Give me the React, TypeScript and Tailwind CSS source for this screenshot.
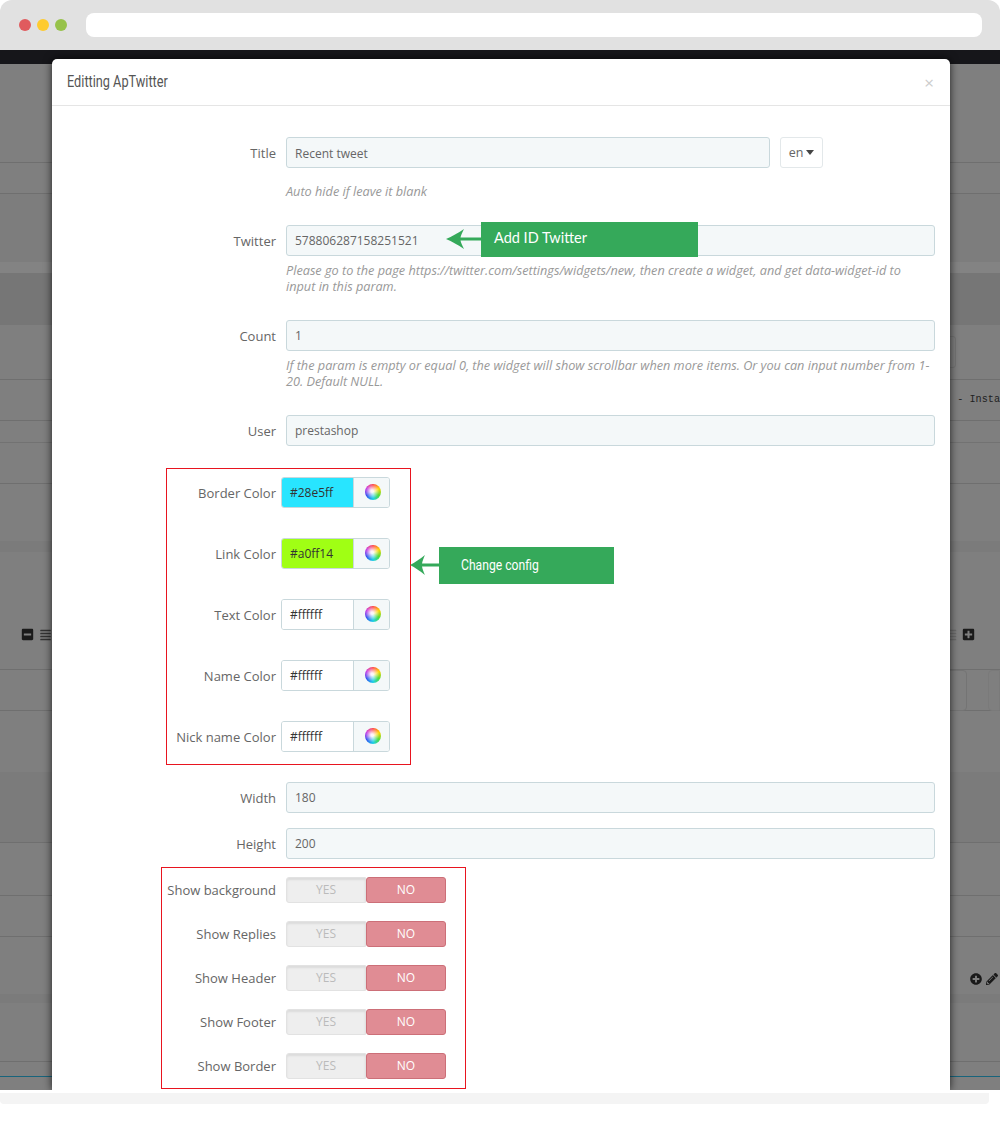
import React from 'react';
import { FaAlignJustify, FaMinusSquare, FaPencilAlt, FaPlusCircle, FaPlusSquare } from 'react-icons/fa';

const sans = "font-['Open_Sans',sans-serif]";

function Arrow({ className }: { className: string }) {
  return (
    <svg viewBox="0 0 35 22" preserveAspectRatio="none" className={`h-[22px] shrink-0 ${className}`}>
      <path d="M0 11 C6 8.5 12 5 18 1 C16.5 4 15 7 14.5 9.5 H35 V12.5 H14.5 C15 15 16.5 18 18 21 C12 17 6 13.5 0 11 Z" fill="#35a95a" />
    </svg>
  );
}

function Field({ label, value, children }: { label: string; value: string; children?: React.ReactNode }) {
  return (
    <div className="relative flex items-center">
      <div className="w-[224px] pt-[3px] text-right text-[13px] text-[#666]">{label}</div>
      <div className="ml-[10px] flex h-[31px] w-[649px] items-center rounded-[3px] border border-[#c9d8dc] bg-[#f4f8f9] px-2 pt-[2px] text-[12px] text-[#666]">
        {value}
      </div>
      {children}
    </div>
  );
}

function Hint({ children, className }: { children: React.ReactNode; className?: string }) {
  return (
    <div className={`ml-[234px] w-[646px] text-[12.7px] leading-[16.5px] text-[#999] italic ${className ?? ''}`}>{children}</div>
  );
}

function ColorRow({ label, value, bg }: { label: string; value: string; bg: string }) {
  return (
    <div className="flex items-center justify-end gap-[5px]">
      <div className="pt-[3px] text-[13px] text-[#666]">{label}</div>
      <div className="flex h-[31px] w-[109px] overflow-hidden rounded-[3px] border border-[#c9d8dc]">
        <div className={`flex w-[71px] items-center pt-[2px] pl-2 text-[12px] text-[#333] ${bg}`}>{value}</div>
        <div className="flex flex-1 items-center justify-center border-l border-[#c9d8dc] bg-[#f4f8f9] pl-[2px]">
          <div className="flex h-4 w-4 items-center justify-center rounded-full bg-[conic-gradient(#ff3b3b,#ffd500,#4fdc3c,#1fd0e8,#2f4ff0,#c01fe0,#ff3b3b)]">
            <div className="h-4 w-4 rounded-full bg-[radial-gradient(circle_at_45%_45%,rgba(255,255,255,0.95)_10%,rgba(255,255,255,0)_58%)]" />
          </div>
        </div>
      </div>
    </div>
  );
}

function SwitchRow({ label }: { label: string }) {
  return (
    <div className="flex items-center justify-end gap-[10px]">
      <div className="pt-[2px] text-[13px] text-[#666]">{label}</div>
      <div className="flex h-[26px] w-[160px] text-[12px]">
        <div className="flex w-[80px] items-center justify-center rounded-l-[3px] border border-[#e2e2e2] bg-[#eeeeee] text-[#bbb] shadow-[inset_0_2px_2px_rgba(0,0,0,0.08)]">YES</div>
        <div className="flex w-[80px] items-center justify-center rounded-[3px] border border-[#cc6f78] bg-[#e08c94] text-white">NO</div>
      </div>
    </div>
  );
}

function Modal() {
  return (
    <div className={`absolute top-[9px] left-[52px] h-[1031px] w-[898px] overflow-hidden rounded-t-[5px] bg-white shadow-[0_0_9px_rgba(0,0,0,0.75)] ${sans}`}>
      <div className="flex h-[47px] items-center justify-between border-b border-[#e5e5e5] pr-[16px] pl-[15px]">
        <div className="origin-left scale-x-[0.795] font-['Roboto',sans-serif] text-[16px] text-[#555]">Editting ApTwitter</div>
        <div className="text-[17px] leading-none text-[#ccc]">×</div>
      </div>

      <div className="mt-[31px] flex items-center">
        <div className="w-[224px] pt-[3px] text-right text-[13px] text-[#666]">Title</div>
        <div className="ml-[10px] flex h-[31px] w-[484px] items-center rounded-[3px] border border-[#c9d8dc] bg-[#f4f8f9] px-2 pt-[2px] text-[12px] text-[#666]">Recent tweet</div>
        <div className="ml-[10px] flex h-[31px] w-[43px] items-center justify-center gap-[3px] rounded-[3px] border border-[#e3e8ea] pt-[2px] text-[12.5px] text-[#666]">
          en
          <span className="mb-[2px] border-x-[4.5px] border-t-[5px] border-x-transparent border-t-[#444]" />
        </div>
      </div>
      <Hint className="mt-[15px]">Auto hide if leave it blank</Hint>

      <div className="mt-[25px]">
        <Field label="Twitter" value="578806287158251521">
          <div className="absolute top-[-3px] left-[394px] flex items-center">
            <Arrow className="w-[35px]" />
            <div className="flex h-[35px] w-[217px] items-center bg-[#35a95a] pb-[2px] pl-[13px] font-['Lato',sans-serif] text-[14.5px] text-white">Add ID Twitter</div>
          </div>
        </Field>
      </div>
      <Hint className="mt-[6px]">Please go to the page https://twitter.com/settings/widgets/new, then create a widget, and get data-widget-id to input in this param.</Hint>

      <div className="mt-[25px]">
        <Field label="Count" value="1" />
      </div>
      <Hint className="mt-[6px]">If the param is empty or equal 0, the widget will show scrollbar when more items. Or you can input number from 1-20. Default NULL.</Hint>

      <div className="mt-[25px]">
        <Field label="User" value="prestashop" />
      </div>

      <div className="mt-[22px] flex items-start">
        <div className="ml-[114px] flex h-[297px] w-[245px] flex-col gap-[30px] border border-[#e8141f] pt-[8px] pr-[20px]">
          <ColorRow label="Border Color" value="#28e5ff" bg="bg-[#28e5ff]" />
          <ColorRow label="Link Color" value="#a0ff14" bg="bg-[#a0ff14]" />
          <ColorRow label="Text Color" value="#ffffff" bg="bg-white" />
          <ColorRow label="Name Color" value="#ffffff" bg="bg-white" />
          <ColorRow label="Nick name Color" value="#ffffff" bg="bg-white" />
        </div>
        <div className="mt-[79px] -ml-[1px] flex items-center">
          <Arrow className="w-[29px]" />
          <div className="flex h-[37px] w-[175px] items-center bg-[#35a95a] pl-[22px] text-white">
            <span className="origin-left scale-x-[0.81] font-['Roboto',sans-serif] text-[15px]">Change config</span>
          </div>
        </div>
      </div>

      <div className="mt-[17px]">
        <Field label="Width" value="180" />
      </div>
      <div className="mt-[15px]">
        <Field label="Height" value="200" />
      </div>

      <div className="mt-[8px] ml-[109px] flex h-[222px] w-[305px] flex-col gap-[18px] border border-[#e8141f] pt-[9px] pr-[19px]">
        <SwitchRow label="Show background" />
        <SwitchRow label="Show Replies" />
        <SwitchRow label="Show Header" />
        <SwitchRow label="Show Footer" />
        <SwitchRow label="Show Border" />
      </div>
    </div>
  );
}

// the dimmed admin page behind the modal
function Backdrop() {
  return (
    <div className="flex flex-col bg-[#7f7f7f]">
      <div className="h-[14px] bg-[#16161a]" />
      <div className="h-[99px] border-b border-[#6f6f6f]" />
      <div className="h-[31px] border-b border-[#6f6f6f]" />
      <div className="h-[68px] bg-[#7d7d7d]" />
      <div className="h-[11px] bg-[#838383]" />
      <div className="h-[52px] bg-[#767676]" />
      <div className="flex h-[55px] items-center justify-end border-b border-[#6f6f6f] pr-[44px]">
        <div className="h-[32px] w-[8px] rounded-r-[3px] border border-[#747474]" />
      </div>
      <div className="flex h-[41px] items-center justify-end border-b border-[#6f6f6f]">
        <span className="font-['Liberation_Mono',monospace] text-[10.2px] whitespace-nowrap text-[#222]">- Insta</span>
      </div>
      <div className="h-[22px] border-b border-[#727272]" />
      <div className="h-[41px] border-b border-[#6f6f6f]" />
      <div className="h-[57px]" />
      <div className="h-[11px] bg-[#7b7b7b]" />
      <div className="h-[68px]" />
      <div className="flex h-[50px] items-start justify-between border-b border-[#6f6f6f] pt-[8px] pr-[25px] pl-[21px] text-[13px]">
        <div className="flex items-center gap-[5px] text-[#1a1a1a]">
          <FaMinusSquare className="h-[13px] w-[13px]" />
          <FaAlignJustify className="h-[12px] w-[13px] text-[#333]" />
        </div>
        <div className="flex items-center gap-[5px] text-[#1a1a1a]">
          <FaAlignJustify className="h-[12px] w-[12px] text-[#6a6a6a]" />
          <FaPlusSquare className="h-[13px] w-[13px]" />
        </div>
      </div>
      <div className="flex h-[41px] justify-end gap-[21px] border-b border-[#6f6f6f]">
        <div className="h-[41px] w-[30px] rounded-r-[4px] border border-[#747474]" />
        <div className="h-[41px] w-[12px] rounded-l-[4px] border border-[#7a7a7a]" />
      </div>
      <div className="h-[61px]" />
      <div className="h-[10px] bg-[#7b7b7b]" />
      <div className="h-[60px] bg-[#7b7b7b]" />
      <div className="h-[54px] border-t border-b border-[#6f6f6f]" />
      <div className="h-[41px] border-b border-[#6f6f6f]" />
      <div className="flex h-[57px] items-end justify-end gap-[4px] pr-[2px] pb-[9px] text-[#1a1a1a]">
        <FaPlusCircle className="h-[12px] w-[12px]" />
        <FaPencilAlt className="h-[12px] w-[12px]" />
      </div>
      <div className="h-[9px] bg-[#7b7b7b]" />
      <div className="h-[59px] border-b border-[#6f6f6f]" />
      <div className="h-[15px] border-b border-[#17647c]" />
      <div className="h-[13px]" />
    </div>
  );
}

export default function App() {
  return (
    <div className="h-[1123px] w-[1000px] overflow-hidden bg-white">
      {/* browser chrome */}
      <div className="flex h-[50px] items-center gap-[6px] rounded-t-xl bg-[#e1e1e1] pb-[1px] pl-[19px]">
        <span className="h-3 w-3 rounded-full bg-[#e05b5e]" />
        <span className="h-3 w-3 rounded-full bg-[#fecb2f]" />
        <span className="h-3 w-3 rounded-full bg-[#97c24a]" />
        <div className="ml-[13px] h-[24px] w-[896px] rounded-lg bg-white" />
      </div>

      <div className="relative h-[1040px] overflow-hidden">
        <Backdrop />
        <Modal />
      </div>

      <div className="mt-[3px] h-[11px] w-[989px] rounded-b bg-[#f4f4f4]" />
    </div>
  );
}
